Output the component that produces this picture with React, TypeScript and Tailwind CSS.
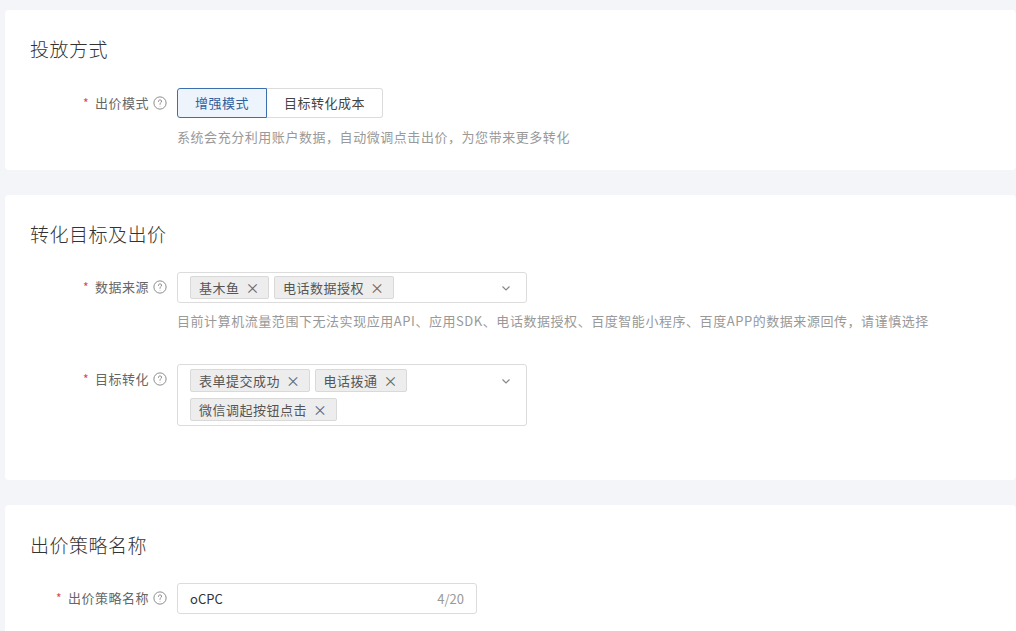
import React from 'react';

const font = { fontFamily: '"Noto Sans CJK SC", "Liberation Sans", sans-serif' };

const Help = () => (
  <svg className="w-[14px] h-[14px] ml-[4px]" viewBox="0 0 16 16" fill="none" stroke="#888" strokeWidth={1.1}>
    <circle cx="8" cy="8" r="7" />
    <path d="M6.2 6.2a1.8 1.8 0 1 1 2.6 1.6c-.6.3-.8.7-.8 1.3v.4" strokeLinecap="round" />
    <circle cx="8" cy="11.6" r=".5" fill="#888" stroke="none" />
  </svg>
);

const Label = ({ text }: { text: string }) => (
  <div className="w-[162px] shrink-0 flex items-center justify-end h-[30px] text-[13px] tracking-[0.5px] text-[#666] mr-[10px]">
    <span className="text-[#e0483e] mr-[6px] text-[12px]">*</span>
    {text}
    <Help />
  </div>
);

const Tag = ({ text }: { text: string }) => (
  <span className="inline-flex items-center h-[23px] px-[8px] bg-[#ededed] border border-[#d9d9d9] rounded-[2px] text-[13px] tracking-[0.5px] text-[#555]">
    {text}
    <span className="ml-[6px] text-[#666] text-[14px]">×</span>
  </span>
);

const Chevron = () => (
  <svg className="w-[12px] h-[12px]" viewBox="0 0 12 12" fill="none" stroke="#888" strokeWidth={1.2}>
    <path d="M2.5 4.5 6 8l3.5-3.5" />
  </svg>
);

const Card = ({ children, className }: { children: React.ReactNode; className: string }) => (
  <div className={`bg-white rounded-[4px] ml-[5px] ${className}`}>{children}</div>
);

export default function App() {
  return (
    <div className="bg-[#f4f5f8] w-[1016px] h-[631px] overflow-hidden pt-[10px]" style={font}>
      <Card className="pt-[28px] pb-[23px] h-[160px]">
        <div className="pl-[25px] text-[19px] font-light tracking-[0.5px] leading-[22px] text-[#333] mb-[28px]">投放方式</div>
        <div className="flex">
          <Label text="出价模式" />
          <div>
            <div className="flex h-[30px] text-[13px] tracking-[0.5px]">
              <div className="w-[90px] flex items-center justify-center border border-[#3d6fb0] bg-[#eef4fb] text-[#2f5f9f] rounded-l-[3px]">增强模式</div>
              <div className="w-[116px] flex items-center justify-center border border-l-0 border-[#dcdcdc] text-[#444] rounded-r-[3px]">目标转化成本</div>
            </div>
            <div className="mt-[9px] text-[13px] tracking-[0.55px] leading-[20px] text-[#999]">系统会充分利用账户数据，自动微调点击出价，为您带来更多转化</div>
          </div>
        </div>
      </Card>

      <Card className="mt-[25px] pt-[28px] h-[285px]">
        <div className="pl-[25px] text-[19px] font-light tracking-[0.5px] leading-[22px] text-[#333] mb-[27px]">转化目标及出价</div>
        <div className="flex">
          <Label text="数据来源" />
          <div>
            <div className="w-[350px] h-[31px] border border-[#dcdcdc] rounded-[3px] flex items-center pl-[12px] pr-[14px]">
              <div className="flex gap-[5px] flex-1">
                <Tag text="基木鱼" />
                <Tag text="电话数据授权" />
              </div>
              <Chevron />
            </div>
            <div className="mt-[8px] text-[13px] tracking-[0.55px] leading-[20px] text-[#999] whitespace-nowrap">目前计算机流量范围下无法实现应用API、应用SDK、电话数据授权、百度智能小程序、百度APP的数据来源回传，请谨慎选择</div>
          </div>
        </div>
        <div className="flex mt-[33px]">
          <Label text="目标转化" />
          <div className="w-[350px] h-[62px] border border-[#dcdcdc] rounded-[3px] flex items-start pl-[12px] pr-[14px] pt-[4px]">
            <div className="flex flex-wrap gap-x-[5px] gap-y-[6px] flex-1 w-[280px]">
              <Tag text="表单提交成功" />
              <Tag text="电话拨通" />
              <Tag text="微信调起按钮点击" />
            </div>
            <div className="mt-[6px]"><Chevron /></div>
          </div>
        </div>
      </Card>

      <Card className="mt-[25px] pt-[29px] h-[200px]">
        <div className="pl-[25px] text-[19px] font-light tracking-[0.5px] leading-[22px] text-[#333] mb-[27px]">出价策略名称</div>
        <div className="flex">
          <Label text="出价策略名称" />
          <div className="w-[300px] h-[31px] border border-[#dcdcdc] rounded-[3px] flex items-center justify-between px-[12px] text-[13px]">
            <span className="text-[#333]">oCPC</span>
            <span className="text-[#999]">4/20</span>
          </div>
        </div>
      </Card>
    </div>
  );
}
